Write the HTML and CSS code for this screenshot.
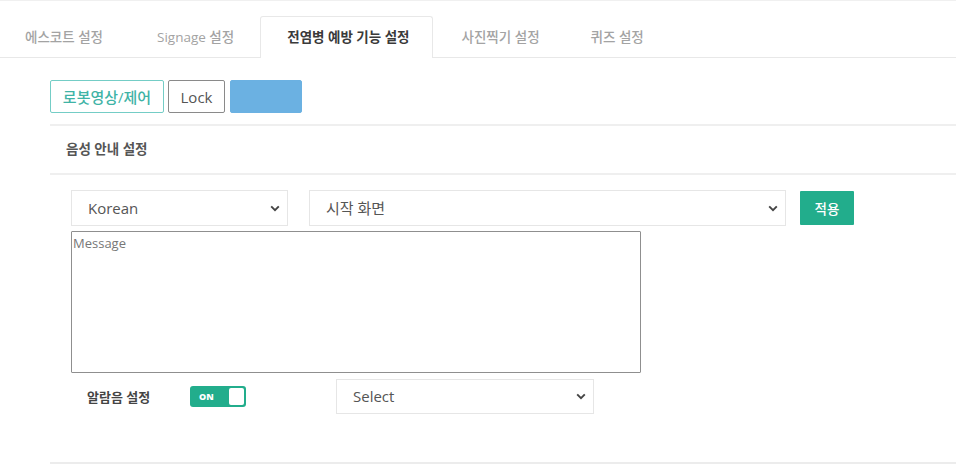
FILE: index.html
```html
<!DOCTYPE html>
<html lang="ko">
<head>
<meta charset="utf-8">
<link rel="stylesheet" href="styles.css">
</head>
<body>
<div class="page">
  <ul class="tabs">
    <li class="tab">에스코트 설정</li>
    <li class="tab">Signage 설정</li>
    <li class="tab active">전염병 예방 기능 설정</li>
    <li class="tab">사진찍기 설정</li>
    <li class="tab">퀴즈 설정</li>
  </ul>
  <div class="content">
    <div class="btn-row">
      <button class="btn btn-teal">로봇영상/제어</button>
      <button class="btn btn-gray">Lock</button>
      <button class="btn btn-blue"></button>
    </div>
    <div class="section-head">음성 안내 설정</div>
    <div class="form">
      <div class="select-row">
        <select class="sel sel-lang"><option>Korean</option></select>
        <select class="sel sel-screen"><option>시작 화면</option></select>
        <button class="btn-apply">적용</button>
      </div>
      <textarea class="message" placeholder="Message"></textarea>
      <div class="alarm-row">
        <span class="alarm-label">알람음 설정</span>
        <span class="toggle"><span class="toggle-text">ON</span><span class="knob"></span></span>
        <select class="sel sel-sound"><option>Select</option></select>
      </div>
    </div>
  </div>
</div>
</body>
</html>
```
FILE: styles.css
```css
html, body {
  margin: 0;
  padding: 0;
  background: #fff;
}
body {
  font-family: "Open Sans", "Noto Sans CJK KR", sans-serif;
  color: #555;
}
.page {
  border-top: 1px solid #f0f0f0;
  height: 471px;
}
.tabs {
  list-style: none;
  margin: 0;
  padding: 15px 0 0 0;
  display: flex;
  border-bottom: 1px solid #e8e8e8;
}
.tab {
  height: 40px;
  line-height: 40px;
  padding: 0 26px 0 24px;
  font-size: 13.5px;
  color: #a3a3a3;
  font-weight: 500;
  border: 1px solid transparent;
  border-bottom: none;
  margin-bottom: -1px;
}
.tab:nth-child(2) { padding-left: 26px; padding-right: 25px; }
.tab.active {
  color: #3a3a3a;
  font-weight: 600;
  background: #fff;
  border-color: #e8e8e8;
  border-radius: 3px 3px 0 0;
  height: 41px;
  padding: 0 22px 0 26px;
}
.tab:nth-child(4) { padding-left: 28px; padding-right: 25px; }
.content {
  padding-left: 50px;
}
.btn-row {
  display: flex;
  gap: 4px;
  margin-top: 22px;
  height: 33px;
}
.btn {
  font-family: "Open Sans", "Noto Sans CJK KR", sans-serif;
  font-size: 15px;
  height: 33px;
  border-radius: 2px;
  background: #fff;
  padding: 0;
  cursor: pointer;
}
.btn-teal {
  width: 114px;
  border: 1px solid #74cdc6;
  color: #3fb3a6;
  font-weight: 500;
}
.btn-gray {
  width: 57px;
  border: 1px solid #8a8a8a;
  color: #555;
}
.btn-blue {
  width: 72px;
  margin-left: 1px;
  border: 1px solid #6bb1e2;
  background: #6bb1e2;
}
.section-head {
  margin-top: 11px;
  border-top: 2px solid #efefef;
  border-bottom: 2px solid #efefef;
  height: 47px;
  line-height: 47px;
  padding-left: 16px;
  font-size: 13.5px;
  font-weight: 600;
  color: #555;
}
.form {
  padding: 15px 0 0 21px;
  border-bottom: 2px solid #ececec;
  height: 272px;
}
.select-row {
  display: flex;
  align-items: center;
  height: 36px;
}
.sel {
  appearance: none;
  -webkit-appearance: none;
  height: 36px;
  border: 1px solid #e6e6e6;
  border-radius: 0;
  background-color: #fff;
  background-image: url("data:image/svg+xml;utf8,<svg xmlns='http://www.w3.org/2000/svg' width='10' height='7' viewBox='0 0 10 7'><path d='M1.2 1.4 L5 5.2 L8.8 1.4' fill='none' stroke='%23444' stroke-width='1.9'/></svg>");
  background-repeat: no-repeat;
  background-position: right 7px center;
  font-family: "Open Sans", "Noto Sans CJK KR", sans-serif;
  font-size: 15px;
  color: #555;
  padding: 0 30px 0 16px;
}
.sel-lang {
  width: 217px;
}
.sel-screen {
  width: 477px;
  margin-left: 21px;
}
.btn-apply {
  margin-left: 14px;
  width: 54px;
  height: 34px;
  border: none;
  border-radius: 1px;
  background: #22ad8c;
  color: #fff;
  font-family: "Noto Sans CJK KR", sans-serif;
  font-size: 13.5px;
  font-weight: 500;
  padding: 0;
}
.message {
  display: block;
  margin-top: 5px;
  width: 570px;
  height: 142px;
  box-sizing: border-box;
  border: 1px solid #8f8f8f;
  border-radius: 1px;
  padding: 2px 1px;
  resize: none;
  font-family: "Open Sans", "Noto Sans CJK KR", sans-serif;
  font-size: 13px;
  color: #555;
}
.message::placeholder {
  color: #777;
}
.alarm-row {
  display: flex;
  align-items: center;
  margin-top: 5px;
  height: 36px;
}
.alarm-label {
  margin-left: 16px;
  width: 103px;
  font-size: 13px;
  font-weight: 600;
  color: #444;
}
.toggle {
  display: flex;
  align-items: center;
  justify-content: space-between;
  box-sizing: border-box;
  width: 56px;
  height: 21px;
  padding: 0 2px 0 9px;
  border-radius: 3px;
  background: #22ad8c;
}
.toggle-text {
  color: #fff;
  font-family: "Open Sans", sans-serif;
  font-size: 9px;
  font-weight: 800;
}
.knob {
  width: 15px;
  height: 17px;
  border-radius: 2px;
  background: #fff;
}
.sel-sound {
  margin-left: 90px;
  width: 258px;
  height: 35px;
}
```
